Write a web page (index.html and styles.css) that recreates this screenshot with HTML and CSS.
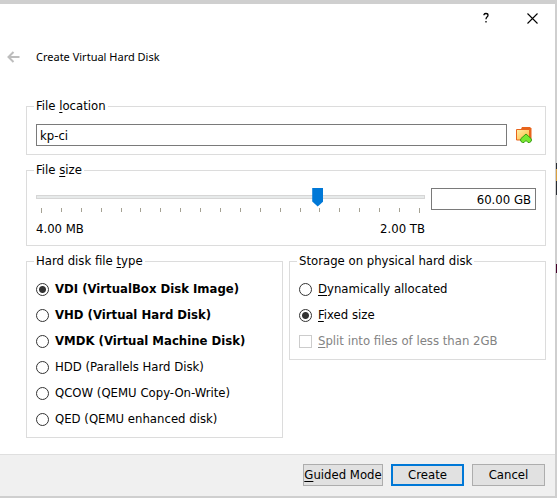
FILE: index.html
```html
<!DOCTYPE html>
<html lang="en">
<head>
<meta charset="utf-8">
<title>Create Virtual Hard Disk</title>
<link rel="stylesheet" href="styles.css">
</head>
<body>
<form class="dialog">
  <header class="titlebar">
    <button type="button" class="icon-button" aria-label="Help">
      <svg width="8" height="12" viewBox="0 0 8 12" fill="none" stroke="#000" stroke-width="1.300"><path d="M2 3.300V2.500Q2.500 1.500 4 1.500Q6 1.500 6 3.200Q6 4.200 5 5Q4 5.800 4 7.300"/><path d="M4 9V10.500"/></svg>
    </button>
    <button type="button" class="icon-button" aria-label="Close">
      <svg width="11" height="11" viewBox="0 0 11 11" fill="none" stroke="#000" stroke-width="1.100"><path d="M.5 .5L10.500 10.500M10.500 .5L.5 10.500"/></svg>
    </button>
  </header>
  <div class="heading">
    <button type="button" class="back" aria-label="Back" disabled>
      <svg width="13" height="12" viewBox="0 0 13 12" fill="none" stroke="#bdbdbd" stroke-width="2"><path d="M1.500 6H12.500M6.500 1L1.500 6L6.500 11"/></svg>
    </button>
    <h1>Create Virtual Hard Disk</h1>
  </div>

  <main class="content">
    <fieldset class="group">
      <legend><label for="location">File <u>l</u>ocation</label></legend>
      <div class="location-row">
        <input id="location" class="field" type="text" value="kp-ci">
        <button type="button" class="browse" aria-label="Choose location">
          <svg width="18" height="18" viewBox="0 0 18 18">
            <defs><linearGradient id="folder" x1="0" y1="0" x2="1" y2="1"><stop offset="0" stop-color="#fff0a8"/><stop offset="1" stop-color="#fdb73a"/></linearGradient></defs>
            <path d="M6 3L7 1H15L16.500 2.500V13H6Z" fill="#e8641c"/>
            <path d="M1.500 3.500H14.500V14H1.500Z" fill="url(#folder)" stroke="#e8641c"/>
            <path d="M11 8L16 12.500Q17 14 16 15.500Q14.500 17 13 16.500L11 14.500L9 16.500Q7.500 17 6 15.500Q5 14 6 12.500Z" fill="#77e830" stroke="#389c12"/>
          </svg>
        </button>
      </div>
    </fieldset>

    <fieldset class="group">
      <legend><label for="size">File <u>s</u>ize</label></legend>
      <div class="size-row">
        <div class="scale">
          <input class="slider" type="range" min="0" max="1000" value="732" aria-label="File size">
          <div class="ticks"><i></i><i></i><i></i><i></i><i></i><i></i><i></i><i></i><i></i><i></i><i></i><i></i><i></i><i></i><i></i><i></i><i></i><i></i><i></i><i></i></div>
          <div class="limits"><span>4.00 MB</span><span>2.00 TB</span></div>
        </div>
        <input id="size" class="field size-field" type="text" value="60.00 GB">
      </div>
    </fieldset>

    <div class="columns">
      <fieldset class="group options">
        <legend>Hard disk file <u>t</u>ype</legend>
        <label class="option recommended"><input type="radio" name="type" checked>VDI (VirtualBox Disk Image)</label>
        <label class="option recommended"><input type="radio" name="type">VHD (Virtual Hard Disk)</label>
        <label class="option recommended"><input type="radio" name="type">VMDK (Virtual Machine Disk)</label>
        <label class="option"><input type="radio" name="type">HDD (Parallels Hard Disk)</label>
        <label class="option"><input type="radio" name="type">QCOW (QEMU Copy-On-Write)</label>
        <label class="option"><input type="radio" name="type">QED (QEMU enhanced disk)</label>
      </fieldset>
      <fieldset class="group options">
        <legend>Storage on physical hard disk</legend>
        <label class="option"><input type="radio" name="storage"><span><u>D</u>ynamically allocated</span></label>
        <label class="option"><input type="radio" name="storage" checked><span><u>F</u>ixed size</span></label>
        <label class="option disabled"><input type="checkbox" disabled><span><u>S</u>plit into files of less than 2GB</span></label>
      </fieldset>
    </div>
  </main>

  <footer class="actions">
    <button type="button" class="button guided"><u>G</u>uided Mode</button>
    <button type="submit" class="button primary">Create</button>
    <button type="button" class="button">Cancel</button>
  </footer>
</form>
</body>
</html>
```
FILE: styles.css
```css
* { box-sizing: border-box; }

body {
  margin: 0;
  padding: 4px 2px 2px 0;
  min-height: 100vh;
  display: flex;
  /* Sliver of the desktop that shows past the dialog's right edge */
  background:
    linear-gradient(#0000 163px, #2a2d33 163px 169px, #d9a040 169px 181px, #2a2d33 181px 195px, #0000 195px 264px, #45002a 264px 273px, #0000 273px) right top / 1px 100% no-repeat,
    #cfcfcf;
  color: #000;
  font: 13px/16px "DejaVu Sans Condensed", "DejaVu Sans", sans-serif;
  font-stretch: condensed;
}

input, button { font: inherit; color: inherit; margin: 0; }
u { text-underline-offset: 2px; }
svg { display: block; }

.dialog {
  flex: 1;
  display: flex;
  flex-direction: column;
  background: #fff;
}

.titlebar {
  display: flex;
  justify-content: flex-end;
  height: 28px;
}

.icon-button, .back, .browse {
  display: flex;
  align-items: center;
  justify-content: center;
  padding: 0;
  border: 0;
  background: none;
}
.icon-button { width: 46px; }

.heading {
  display: flex;
  align-items: center;
  height: 50px;
  margin-bottom: 16px;
}
.back { width: 26px; }
.heading h1 {
  margin: 0 0 0 10px;
  font: 11px/16px "Noto Sans", sans-serif;
}

.content {
  flex: 1;
  display: flex;
  flex-direction: column;
  gap: 7px;
  padding: 0 9px 0 26px;
}

.group {
  min-width: 0;
  margin: 0;
  padding: 10px 9px 8px;
  border: 1px solid #dcdcdc;
}
.group legend {
  margin-left: -2px;
  padding: 0 2px;
}

.field {
  height: 22px;
  min-width: 0;
  padding: 0 3px;
  border: 1px solid #7a7a7a;
  background: #fff;
}

.location-row { display: flex; align-items: center; gap: 8px; }
.location-row .field { flex: 1; }
.browse { width: 18px; margin-right: 3px; }

.size-row { display: flex; align-items: flex-start; gap: 6px; }
.scale { flex: 1; }
.size-field { width: 105px; padding: 0 4px; text-align: right; }

.slider {
  display: block;
  width: 100%;
  height: 17px;
  appearance: none;
  background: none;
}
.slider::-webkit-slider-runnable-track {
  height: 4px;
  border: 1px solid #d6d6d6;
  background: #e7eaea;
}
.slider::-webkit-slider-thumb {
  appearance: none;
  width: 11px;
  height: 19px;
  margin-top: -8px;
  background: #0078d7;
  clip-path: polygon(0 0, 100% 0, 100% 74%, 50% 100%, 0 74%);
}

.ticks {
  display: flex;
  justify-content: space-between;
  height: 5px;
  margin: 3px 5px 8px;
}
.ticks i { width: 1px; height: 4px; background: #a5a294; }
.ticks i:first-child, .ticks i:last-child { height: 5px; }

.limits { display: flex; justify-content: space-between; }

.columns {
  display: grid;
  grid-template-columns: 1fr 1fr;
  align-items: start;
  gap: 6px;
}

.options { padding-top: 7px; padding-bottom: 5px; }
.option {
  display: flex;
  align-items: center;
  gap: 6px;
  height: 26px;
  white-space: nowrap;
}
.option input {
  appearance: none;
  flex: none;
  width: 13px;
  height: 13px;
  border: 1px solid #333;
  background: #fff;
}
.option input[type="radio"] { border-radius: 50%; }
.option input[type="radio"]:checked {
  background: radial-gradient(circle, #333 3px, #fff 4px);
}
.recommended { font-weight: bold; }
.disabled { color: #838383; }
.option input:disabled { border-color: #ccc; }

.actions {
  display: flex;
  justify-content: flex-end;
  gap: 8px;
  padding: 9px 10px 10px;
  border-top: 1px solid #dfdfdf;
  background: #f0f0f0;
}
.button {
  width: 73px;
  height: 22px;
  padding: 0;
  border: 1px solid #adadad;
  background: #e1e1e1;
  white-space: nowrap;
}
.guided { width: 80px; }
.primary { border: 2px solid #0078d7; }
```
